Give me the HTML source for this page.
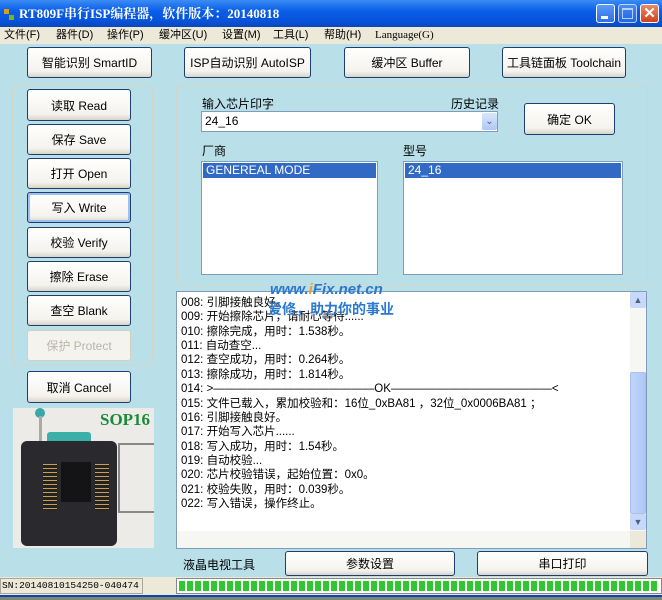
<!DOCTYPE html>
<html><head><meta charset="utf-8"><style>
*{box-sizing:border-box;margin:0;padding:0}
body{width:662px;height:600px;overflow:hidden;position:relative;background:#b9dfe8;font-family:"Liberation Sans","Noto Sans CJK SC",sans-serif;font-size:12px;color:#000}
.a{position:absolute}
.title{left:0;top:0;width:662px;height:27px;background:linear-gradient(#3c8cf4,#0a5ee8 40%,#0752d8 80%,#0a47b8);color:#fff;font-family:"Liberation Serif","Noto Serif CJK SC",serif;font-weight:bold;font-size:13px;line-height:27px;padding-left:19px}
.tb{top:4px;width:19px;height:19px;border:1px solid #fff;border-radius:3px;background:linear-gradient(#5a9af8,#2d6ee8)}
.menu{left:0;top:27px;width:662px;height:17px;background:#ece9d8;font-size:11px;line-height:17px}
.menu span{position:absolute;top:0}
.btn{position:absolute;border:1px solid #1f3d6d;border-radius:3px;background:linear-gradient(#fff,#f4f3ee 80%,#d8d5c8);text-align:center;font-size:12px;display:flex;align-items:center;justify-content:center}
.grp{position:absolute;border:1px solid #d0d6c8;border-radius:4px}
.list{position:absolute;background:#fff;border:1px solid #7f9db9}
.sel{background:#316ac5;color:#fff;height:15px;line-height:15px;padding-left:3px;margin:1px}
.log{left:176px;top:291px;width:471px;height:258px;background:#fff;border:1px solid #7f9db9}
.log div{height:14.36px;line-height:14.36px;font-size:11.5px;padding-left:4px;white-space:nowrap}
</style></head><body>
<div class="a title">RT809F串行ISP编程器，软件版本：20140818</div>
<div class="a" style="left:4px;top:9px;width:5px;height:5px;background:#d4a020"></div><div class="a" style="left:9px;top:15px;width:5px;height:5px;background:#80b020"></div>
<div class="a tb" style="left:596px"><div class="a" style="left:4px;top:11px;width:7px;height:3px;background:#fff"></div></div>
<div class="a tb" style="left:618px;opacity:.7"><div class="a" style="left:3px;top:3px;width:11px;height:11px;border:1px solid #fff;border-top-width:2px"></div></div>
<div class="a tb" style="left:640px;background:linear-gradient(#e88a6a,#d0401c);color:#fff;font:bold 15px/17px 'Liberation Sans';text-align:center">✕</div>
<div class="a menu"><span style="left:4px">文件(F)</span><span style="left:56px">器件(D)</span><span style="left:107px">操作(P)</span><span style="left:159px">缓冲区(U)</span><span style="left:222px">设置(M)</span><span style="left:273px">工具(L)</span><span style="left:324px">帮助(H)</span><span style="left:375px;font-family:'Liberation Serif',serif">Language(G)</span></div>

<div class="btn" style="left:27px;top:47px;width:125px;height:31px">智能识别 SmartID</div>
<div class="btn" style="left:184px;top:47px;width:127px;height:31px">ISP自动识别 AutoISP</div>
<div class="btn" style="left:344px;top:47px;width:126px;height:31px">缓冲区 Buffer</div>
<div class="btn" style="left:502px;top:47px;width:124px;height:31px">工具链面板 Toolchain</div>

<div class="grp" style="left:12px;top:85px;width:141px;height:281px"></div>
<div class="btn" style="left:27px;top:89px;width:104px;height:32px">读取 Read</div>
<div class="btn" style="left:27px;top:124px;width:104px;height:31px">保存 Save</div>
<div class="btn" style="left:27px;top:158px;width:104px;height:31px">打开 Open</div>
<div class="btn" style="left:27px;top:192px;width:104px;height:31px;box-shadow:inset 0 0 0 2px #9cc0f0">写入 Write</div>
<div class="btn" style="left:27px;top:227px;width:104px;height:31px">校验 Verify</div>
<div class="btn" style="left:27px;top:261px;width:104px;height:31px">擦除 Erase</div>
<div class="btn" style="left:27px;top:295px;width:104px;height:31px">查空 Blank</div>
<div class="btn" style="left:27px;top:330px;width:104px;height:31px;border-color:#d4d0c0;color:#b8b6a8;background:#f4f3ee">保护 Protect</div>
<div class="btn" style="left:27px;top:371px;width:104px;height:32px">取消 Cancel</div>

<div class="a" style="left:13px;top:408px;width:141px;height:140px;background:#ecebe8;overflow:hidden">
 <div class="a" style="left:105px;top:35px;width:40px;height:70px;border:2px solid #888;border-right:none"></div>
 <div class="a" style="left:22px;top:0;width:10px;height:10px;border-radius:50%;background:#3aa8a8"></div>
 <div class="a" style="left:26px;top:8px;width:3px;height:25px;background:#aaa"></div>
 <div class="a" style="left:34px;top:24px;width:44px;height:114px;background:#3bb0a8;border-radius:3px"></div>
 <div class="a" style="left:8px;top:33px;width:96px;height:105px;background:#2a2a2e;border-radius:6px"></div>
 <div class="a" style="left:48px;top:54px;width:30px;height:40px;background:#141416"></div>
 <div class="a" style="left:30px;top:56px;width:14px;height:46px;background:repeating-linear-gradient(#c8a050 0 1px,#222 1px 4px)"></div>
 <div class="a" style="left:82px;top:56px;width:14px;height:46px;background:repeating-linear-gradient(#c8a050 0 1px,#222 1px 4px)"></div>
 <div class="a" style="left:87px;top:2px;font:bold 17px 'Liberation Serif',serif;color:#1a8a3a">SOP16</div>
</div>

<div class="grp" style="left:176px;top:85px;width:472px;height:200px"></div>
<div class="a" style="left:202px;top:95px">输入芯片印字</div>
<div class="a" style="left:451px;top:95px">历史记录</div>
<div class="a" style="left:201px;top:111px;width:297px;height:21px;background:#fff;border:1px solid #7f9db9;padding-left:3px;line-height:19px">24_16</div>
<div class="a" style="left:482px;top:113px;width:15px;height:17px;background:linear-gradient(#d8e6fc,#b0c8f4);border-radius:2px;color:#4d6185;font-size:10px;text-align:center;line-height:17px">⌄</div>
<div class="btn" style="left:524px;top:103px;width:91px;height:32px">确定 OK</div>
<div class="a" style="left:202px;top:142px">厂商</div>
<div class="a" style="left:403px;top:142px">型号</div>
<div class="list" style="left:201px;top:161px;width:177px;height:114px"><div class="sel">GENEREAL MODE</div></div>
<div class="list" style="left:403px;top:161px;width:220px;height:114px"><div class="sel">24_16</div></div>

<div class="a log">
<div style="height:4px"></div>
<div>008: 引脚接触良好。</div>
<div>009: 开始擦除芯片，请耐心等待......</div>
<div>010: 擦除完成，用时：1.538秒。</div>
<div>011: 自动查空...</div>
<div>012: 查空成功，用时：0.264秒。</div>
<div>013: 擦除成功，用时：1.814秒。</div>
<div>014: &gt;——————————————OK——————————————&lt;</div>
<div>015: 文件已载入，累加校验和：16位_0xBA81 ，32位_0x0006BA81 ；</div>
<div>016: 引脚接触良好。</div>
<div>017: 开始写入芯片......</div>
<div>018: 写入成功，用时：1.54秒。</div>
<div>019: 自动校验...</div>
<div>020: 芯片校验错误，起始位置：0x0。</div>
<div>021: 校验失败，用时：0.039秒。</div>
<div>022: 写入错误，操作终止。</div>
</div>
<div class="a" style="left:630px;top:292px;width:16px;height:239px;background:#f6f6f2"></div>
<div class="a" style="left:630px;top:292px;width:16px;height:16px;background:#c8d8fa;border-radius:2px;color:#4d6185;font-size:9px;text-align:center;line-height:16px">▲</div>
<div class="a" style="left:630px;top:372px;width:16px;height:142px;background:linear-gradient(90deg,#c0d4fa,#b0c8f6);border:1px solid #a8c0ee;border-radius:2px"></div>
<div class="a" style="left:630px;top:514px;width:16px;height:16px;background:#c8d8fa;border-radius:2px;color:#4d6185;font-size:9px;text-align:center;line-height:16px">▼</div>
<div class="a" style="left:177px;top:531px;width:453px;height:17px;background:#f6f6f2"></div>
<div class="a" style="left:630px;top:531px;width:16px;height:17px;background:#ece9d8"></div>
<div class="a" style="left:270px;top:281px;font:italic bold 15px 'Liberation Sans',sans-serif;color:#2a78d0">www.<span style="color:#f0a020">i</span>Fix.net.cn</div>
<div class="a" style="left:268px;top:299px;font:bold 14px 'Liberation Sans','Noto Sans CJK SC',sans-serif;color:#2a78d0">爱修，助力你的事业</div>

<div class="a" style="left:183px;top:556px">液晶电视工具</div>
<div class="btn" style="left:285px;top:551px;width:170px;height:25px">参数设置</div>
<div class="btn" style="left:477px;top:551px;width:171px;height:25px">串口打印</div>

<div class="a" style="left:0;top:577px;width:662px;height:18px;background:#ece9d8"></div>
<div class="a" style="left:0;top:578px;width:143px;height:16px;border:1px solid #aca899;font:9.5px/14px 'Liberation Mono',monospace;padding-left:1px;white-space:nowrap;overflow:hidden">SN:20140810154250-040474</div>
<div class="a" style="left:176px;top:578px;width:486px;height:16px;border:1px solid #888;background:#fff;padding:2px"><div style="width:100%;height:100%;background:repeating-linear-gradient(90deg,#30c830 0 6px,#fff 6px 8px)"></div></div>
<div class="a" style="left:0;top:595px;width:662px;height:2px;background:#1040c0"></div>
<div class="a" style="left:0;top:597px;width:662px;height:3px;background:#7a8a70"></div>
</body></html>
